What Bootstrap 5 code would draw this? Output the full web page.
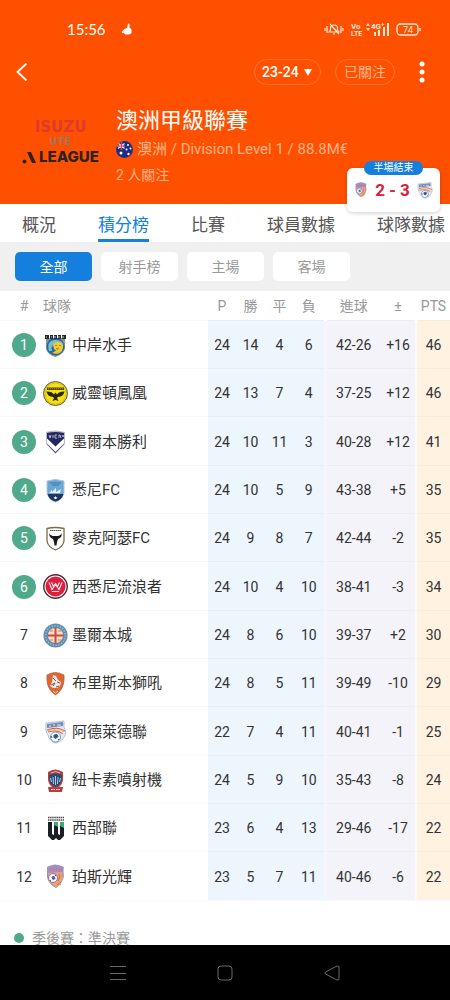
<!DOCTYPE html>
<html lang="zh-Hant">
<head>
<meta charset="utf-8">
<meta name="viewport" content="width=device-width, initial-scale=1">
<title>澳洲甲級聯賽 - 積分榜</title>
<link href="https://cdn.jsdelivr.net/npm/bootstrap@5.3.0/dist/css/bootstrap.min.css" rel="stylesheet">
<style>
  :root { --brand: #ff5000; --accent: #147fdc; --playoff: #4fa98a; --pale: #ffb48c; }
  body { font-family: Roboto, "Noto Sans CJK TC", sans-serif; font-size: 14px; line-height: 20px; color: #333; background: #fff; }
  .app-header { background: var(--brand); color: #fff; height: 204px; }
  .status-bar { height: 58px; padding: 0 28px 0 67px; font-family: Lato, sans-serif; font-size: 15px; }
  .top-nav { height: 28px; padding: 0 25px 0 16px; }
  .pill { height: 26px; border: 1px solid #ff7333; border-radius: 13px; background: transparent; font-size: 14px; line-height: 20px; }
  .season { width: 67px; }
  .season select { appearance: none; border: 0; background: transparent; color: #fff; font-size: 14px; font-weight: 500; padding: 0 0 0 7px; width: 100%; height: 24px; outline-offset: 2px; }
  .season svg { right: 8px; top: 9px; pointer-events: none; }
  .season option { color: #333; }
  .follow { width: 60px; margin: 0 24px 0 14px; color: var(--pale); }
  .dots { padding: 0; border: 0; background: transparent; line-height: 1; }
  .league { padding: 20px 20px 0; gap: 15px; }
  .league-logo { width: 81px; padding-top: 12px; }
  .sponsor { font: bold 15px/18px "DejaVu Sans", sans-serif; color: #e03a2c; }
  .sponsor-sub { font: bold 10px/12px "DejaVu Sans", sans-serif; color: #a5745c; }
  .league-word { font: 800 15px/18px Inter, sans-serif; color: #2a2320; gap: 3px; }
  h1 { font-size: 22px; line-height: 30px; font-weight: 400; }
  .sub { color: var(--pale); line-height: 26px; font-size: 14px; }
  .sub-wide { font-size: 15px; }
  .live-card { right: 10px; bottom: -8px; width: 93px; height: 44px; background: #fff; border-radius: 6px; box-shadow: 0 1px 4px #0003; padding: 0 6px; z-index: 2; }
  .live-card strong { color: #d5203f; font-size: 17px; font-weight: 700; }
  .live-tag { top: -7px; left: 17px; right: 17px; height: 14px; border-radius: 7px; background: var(--accent); color: #fff; font-size: 10px; line-height: 14px; }
  .tabs-bar { height: 38px; padding-left: 22px; gap: 42px; overflow: hidden; font-size: 17px; }
  .tabs-bar a { color: #555; line-height: 42px; height: 38px; text-decoration: none; white-space: nowrap; }
  .tabs-bar a.active { color: var(--accent); box-shadow: inset 0 -3px var(--accent); }
  .filters { background: #f0f0f0; padding: 10px 15px; gap: 9px; }
  .filters .btn { width: 77px; height: 29px; padding: 1px 0 0; border: 0; border-radius: 5px; background: #fff; color: #999; font-size: 14px; }
  .filters .btn.active { background: var(--accent); color: #fff; }
  .standings { table-layout: fixed; width: 100%; text-align: center; }
  .standings th, .standings td { padding: 2px 0 0; font-weight: 400; border-bottom: 1px solid #00000007; }
  .standings thead tr { height: 29px; color: #999; }
  .standings tbody tr { height: 48px; }
  .standings tbody tr:nth-child(3n) { height: 49px; }
  .c-rank { width: 43px; } .c-p { width: 28px; } .c-w { width: 29px; } .c-l { width: 31px; }
  .c-goals { width: 56px; } .c-diff { width: 35px; } .c-pts { width: 34px; }
  .rank { display: block; width: 24px; line-height: 24px; margin-left: 12px; border-radius: 50%; }
  .playoff .rank { background: var(--playoff); color: #fff; }
  .standings .team { text-align: left; white-space: nowrap; }
  .club { font-size: 15px; gap: 4px; }
  .standings td:nth-child(n+3) { background: #edf5fd; }
  .standings td:nth-child(n+7) { background: #f4f3f9; }
  .standings td:nth-child(9) { background: #fff2e0; }
  .standings tr > :nth-child(6) { border-right: 3px solid #f3f7fc; }
  .standings tr > :nth-child(8) { border-right: 2px solid #fbf9f9; }
  .standings thead th:nth-child(n) { border-right-color: #fff; }
  .legend-row { padding: 27px 14px 0; gap: 8px; color: #999; }
  .legend-dot { width: 10px; height: 10px; border-radius: 50%; background: var(--playoff); }
  .system-nav { height: 55px; background: #000; padding: 0 64px; }
  .system-nav button { padding: 0; border: 0; background: transparent; line-height: 1; }
</style>
</head>
<body>
<svg width="0" height="0" class="position-absolute" aria-hidden="true">
  <defs>
    <symbol id="mariners" viewBox="0 0 25 25"><path d="M3 5h19v11q-3 6-9.500 8Q5 22 3 16Z" fill="#8b958f"/><circle cx="12.500" cy="13.500" r="9" fill="#2469a5"/><path d="M6 18Q3 8 12 7q7-1 9 6-2-4-8-3-6 1-4 8Z" fill="#79bed0"/><path d="M9 20q9 3 11-5 1-6-5-6-5 0-6 5 4-4 6-2 2 4-6 8Z" fill="#efc62f"/><circle cx="14.500" cy="13.500" r="4" fill="#f4cc32"/><path d="m12.500 13 1-1m3 0 1 1m-4 2.500q1 1 2 0" stroke="#45433a" fill="none"/><path d="M2 2h4v4H2zm5 0h3v4H7zm4 0h3v4h-3zm4 0h3v4h-3zm4 0h4v4h-4z" fill="#252a32"/><path d="M3 4h1m4 0h1m3-1v2m4-2v2m4-2v2" stroke="#c5c8c0"/></symbol>
    <symbol id="phoenix" viewBox="0 0 25 25"><circle cx="12.500" cy="12.500" r="12" fill="#e9d12c" stroke="#454019" stroke-width=".8"/><circle cx="12.500" cy="12.500" r="10.500" fill="#f8df13" stroke="#c4ac17" stroke-width=".5"/><path d="M4 6.500h17v2.500H4z" fill="#4b4414"/><path d="M5 7.800h15" stroke="#b9a31a" stroke-dasharray="1 1"/><path d="M3.500 10.500q6 0 7.500 3l1.500-2 1.500 2q1.500-3 7.500-3-1 5-6.500 5.500l-1 1 1.500 3-3-1-3 1 1.500-3-1-1q-5.500-.500-6.500-5.500Z" fill="#29270e"/></symbol>
    <symbol id="victory" viewBox="0 0 25 25"><path d="M3 3q9-3 19 0v12l-9.500 10L3 15Z" fill="#b9bac9"/><path d="M4 4q8-2 17 0v11l-8.500 9L4 15Z" fill="#23295e"/><path d="M4 9.500v5l8.500 8.500L21 14.500v-5l-8.500 8Z" fill="#fff"/><path d="m6 6 1 3 1-3m2 0v3m4-3h-2v3h2m2-3v3m0-3h1l1 3m1-3 1 2 1-2" fill="none" stroke="#d5d6e5" stroke-width=".8"/></symbol>
    <symbol id="sydney" viewBox="0 0 25 25"><path d="M4 3q8-3 17 0v12q-2 7-8.500 9Q6 22 4 15Z" fill="#6ba8d4" stroke="#b8c6d4"/><path d="M4.500 16h16Q19 22 12.500 23.500 6 22 4.500 16Z" fill="#1c3663"/><path d="m6 15 3-3 0 2 4-4v4l5-3-1 4Z" fill="#e3f2fb"/><path d="M7 5h11M9 7h7" stroke="#3879b4"/><path d="m12.500 18 .7 1.200h1.300l-.8 1.200-1.200.8-1.200-.8-.8-1.200h1.300Z" fill="#f1f3f5"/></symbol>
    <symbol id="macarthur" viewBox="0 0 25 25"><path d="M4 2.500q8-2 17 0V15q-1 6-8.500 9Q5 21 4 15Z" fill="#fff" stroke="#77703d" stroke-width="1.300"/><path d="M7 4.500h11" stroke="#555" stroke-dasharray="1.500 .5"/><path d="M6.500 7q-1 4.500 3.500 6l1 3 .500 3.500h2l.500-3.500 1-3q4.500-1.500 3.500-6-.500 2.500-4 3h-4q-3.500-.500-4-3Z" fill="#181818"/></symbol>
    <symbol id="wanderers" viewBox="0 0 25 25"><circle cx="12.500" cy="12.500" r="11.700" fill="#fff" stroke="#51252b" stroke-width="1.400"/><circle cx="12.500" cy="12.500" r="10" fill="#dc2040"/><path d="m6 8.500 3 7 3.500-5 3.500 5 3-7M8.500 8.500l2 4 2-3 2 3 2-4M9 17.500h7" fill="none" stroke="#ffdfe4" stroke-width="1.200"/></symbol>
    <symbol id="city" viewBox="0 0 25 25"><circle cx="12.500" cy="12.500" r="12" fill="#628db0"/><circle cx="12.500" cy="12.500" r="9.800" fill="none" stroke="#a1bfd2" stroke-dasharray="1.200 1.600" stroke-width="1.600"/><circle cx="12.500" cy="12.500" r="7.600" fill="#f6ddd1"/><path d="M11.500 4.500h2v7h7v2h-7v7h-2v-7h-7v-2h7Z" fill="#d64636"/><path d="M7 8h3m5 0h3M7 17h3m5 0h3" stroke="#e2a84f" stroke-width="1.500"/></symbol>
    <symbol id="roar" viewBox="0 0 25 25"><path d="M4 4q8-5 17 0 1 12-6 18l-2.500 2-2.500-2Q3 16 4 4Z" fill="#df6631" stroke="#a35c42" stroke-width=".7"/><path d="m10 4 3 1 2 4 3 2-1 4-3 2-4 0-3-2 2-4Z" fill="#f3e5dd"/><path d="m10 7 3 3m-5 4 4-2m2-1 3 1m-5 0-2 3m3 1 3-1" stroke="#6b5968"/><path d="m10 20 2.500 2 2.500-2" fill="none" stroke="#ffc9a9"/></symbol>
    <symbol id="adelaide" viewBox="0 0 25 25"><path d="M3 4 21 2v7q3 2 1 7-2 6-9 8-7-2-8-8Q2 13 3 4Z" fill="#e8edf5" stroke="#b4bed1"/><path d="M4 5 20 3v4L4 9Z" fill="#6f88b8"/><path d="M6 7h2m2-1h2m2 0h4" stroke="#e9eef7"/><path d="M4 11q10-4 18 1M5 13q9-3 15 2" fill="none" stroke="#d85243"/><path d="M4 12q9-3 17 1" fill="none" stroke="#e9bc49" stroke-width=".8"/><circle cx="12.500" cy="18" r="5" fill="#fff" stroke="#7290b9"/><path d="m11 16 3-.500 1 2-2 2-2-1Zm-3 1 1 2m6 2 1-1" stroke="#28578e" fill="#28578e"/></symbol>
    <symbol id="jets" viewBox="0 0 25 25"><path d="M5 4q7-5 15 0v8q-1 5-4 7h4l-1 5H6l-1-5h4q-3-2-4-7Z" fill="#b73f3d"/><path d="M6 7q7-3 13 0l-1 8-5.500 4L7 15Z" fill="#254b78"/><path d="m7.500 10 1 4m1.500-5 .500 7m2-8v9m2.500-8-.500 7m3-6-1 4" stroke="#acd0e1"/><path d="M8 5q5-3 9 0" fill="none" stroke="#e6b7a2"/><path d="M8 21.500h9" stroke="#fff" stroke-dasharray="1.500 1"/></symbol>
    <symbol id="western" viewBox="0 0 25 25"><path d="M5 1.500h16M5 4h16" stroke="#474747" stroke-width="1.500" stroke-dasharray="1.500 .6"/><path d="M5 6h4v12l2 1V6h4v12l2 1V6h4v14l-4 4h-2l-2-2-2 2H9l-4-4Z" fill="#1b1e22"/><path d="M11 6h4v5l-4-2Zm6 0h4v6l-4-2Z" fill="#37ae7c"/></symbol>
    <symbol id="glory" viewBox="0 0 25 25"><path d="M4 3q8-5 17 0-1 3 0 9-1 7-8 12Q5 20 4 13Z" fill="#a291be"/><path d="m5 9 14-1 1 8-2 1 0 4-3 0-1 3-4-3-4-3Z" fill="#f0a366"/><path d="M6 5.500h13" stroke="#c9709e" stroke-width="2" stroke-dasharray="1.500 .8"/><circle cx="10" cy="14" r="4.500" fill="#f7f3fa" stroke="#8577b1"/><path d="m9 13 2-.500 1 2-2 1Zm-2 4 1-1m4-4 1-1" stroke="#5e5798" fill="#5e5798"/><path d="m16 10 1 3-2 4m3 1-4 3" stroke="#b56b82" fill="none"/></symbol>
  </defs>
</svg>

<div class="d-flex flex-column vh-100">
  <header class="app-header position-relative flex-shrink-0">
    <div class="status-bar d-flex align-items-center">
      <time>15:56</time>
      <svg class="ms-3" width="10" height="12" viewBox="0 0 10 12" fill="#fff" aria-hidden="true"><path d="M6 1q1-1 1.500 0v4Q9 5 9 6q1 1 .500 2Q10 11 7 11.500H3.500Q2.500 11 2 10H0V8.500L2.500 6 5 5Z"/></svg>
      <svg class="ms-auto" width="98" height="16" viewBox="0 0 98 16" fill="none" stroke="#ffe9d8" aria-label="靜音 VoLTE 4G 電量 74" role="img">
        <path d="M1 7v3m2-5v7m14-7v7m2-5v3M5 11h10l-1.500-2V7q0-3-3.500-3-3.500 0-3.500 3v2Zm4 2h2M6 3l9 10" stroke-width="1.200"/>
        <g fill="#ffe9d8" stroke="none" font-family="Roboto, sans-serif" font-weight="700"><text x="27" y="8" font-size="8">Vo</text><text x="27" y="15" font-size="7">LTE</text><text x="47" y="8" font-size="8">4G⁺</text><path d="m42 5 2-3 2 3Zm0 2 2 3 2-3ZM50 11h2v4h-2Zm4-2h2v6h-2Zm5-3h2v9h-2Zm4-4h2v13h-2Z"/></g>
        <rect x="73" y="3" width="21" height="11" rx="3.500" stroke-width="1.300"/><path d="M96 7v3" stroke-width="1.500"/><text x="79" y="12" font-family="Roboto, sans-serif" font-size="9" fill="#ffe9d8" stroke="none">74</text>
      </svg>
    </div>
    <div class="top-nav d-flex align-items-center">
      <button class="dots" type="button" aria-label="返回"><svg width="12" height="20" viewBox="0 0 12 20" fill="none" stroke="#fff" stroke-width="1.800"><path d="m10.500 1.500-9 8.500 9 8.500"/></svg></button>
      <div class="season pill position-relative ms-auto">
        <select aria-label="賽季"><option>23-24</option><option>22-23</option></select>
        <svg class="position-absolute" width="8" height="7" viewBox="0 0 8 7" fill="#fff" aria-hidden="true"><path d="M0 0h8L4 7Z"/></svg>
      </div>
      <button class="pill follow p-0" type="button">已關注</button>
      <button class="dots" type="button" aria-label="更多"><svg width="6" height="22" viewBox="0 0 6 22" fill="#fff"><circle cx="3" cy="3" r="2.500"/><circle cx="3" cy="11" r="2.500"/><circle cx="3" cy="19" r="2.500"/></svg></button>
    </div>
    <div class="league d-flex">
      <div class="league-logo text-center">
        <div class="sponsor">ISUZU</div>
        <div class="sponsor-sub">UTE</div>
        <div class="league-word d-flex align-items-center justify-content-center">
          <svg class="flex-shrink-0" width="14" height="13" viewBox="0 0 14 13" fill="#2a2320" role="img" aria-label="A"><path d="M5 1h4l5 11h-4Z"/><circle cx="2.500" cy="10.500" r="2"/></svg>
          <span>LEAGUE</span>
        </div>
      </div>
      <div>
        <h1 class="mb-0">澳洲甲級聯賽</h1>
        <div class="sub sub-wide d-flex align-items-center gap-1">
          <svg width="17" height="17" viewBox="0 0 17 17" role="img" aria-label="澳洲國旗"><circle cx="8.500" cy="8.500" r="8.500" fill="#1c2c84"/><path d="M2.500 2.500 8.500 7.500M2 7.500 8.500 2.500M.8 5h7.700M5.500.8v7.700" stroke="#f3dfe8" stroke-width="1.200"/><path d="M.8 5h7.700M5.500.8v7.700" stroke="#e63b3b"/><g fill="#fff"><circle cx="5" cy="12" r="1.500"/><circle cx="12" cy="4" r="1"/><circle cx="14.500" cy="7.500" r="1"/><circle cx="10.500" cy="8.500" r="1"/><circle cx="12.500" cy="13" r="1.200"/></g></svg>
          <span>澳洲 / Division Level 1 / 88.8M€</span>
        </div>
        <div class="sub">2 人關注</div>
      </div>
    </div>
    <a class="live-card position-absolute d-flex align-items-center justify-content-between text-decoration-none" href="#match">
      <span class="live-tag position-absolute text-center">半場結束</span>
      <svg width="16" height="18"><use href="#glory"/></svg>
      <strong>2 - 3</strong>
      <svg width="18" height="18"><use href="#adelaide"/></svg>
    </a>
  </header>

  <nav class="tabs-bar d-flex flex-shrink-0" aria-label="聯賽">
    <a href="#overview">概況</a><a class="active" href="#standings" aria-current="page">積分榜</a><a href="#matches">比賽</a><a href="#players">球員數據</a><a href="#teams">球隊數據</a>
  </nav>

  <main class="flex-grow-1 overflow-hidden" id="standings">
    <div class="filters d-flex">
      <button class="btn active" type="button">全部</button><button class="btn" type="button">射手榜</button><button class="btn" type="button">主場</button><button class="btn" type="button">客場</button>
    </div>
    <table class="standings">
      <thead><tr><th class="c-rank"><span class="rank">#</span></th><th class="team">球隊</th><th class="c-p">P</th><th class="c-w">勝</th><th class="c-w">平</th><th class="c-l">負</th><th class="c-goals">進球</th><th class="c-diff">±</th><th class="c-pts">PTS</th></tr></thead>
      <tbody>
        <tr class="playoff"><td><span class="rank">1</span></td><td class="team"><div class="club d-flex align-items-center"><svg width="25" height="25"><use href="#mariners"/></svg>中岸水手</div></td><td>24</td><td>14</td><td>4</td><td>6</td><td>42-26</td><td>+16</td><td>46</td></tr>
        <tr class="playoff"><td><span class="rank">2</span></td><td class="team"><div class="club d-flex align-items-center"><svg width="25" height="25"><use href="#phoenix"/></svg>威靈頓鳳凰</div></td><td>24</td><td>13</td><td>7</td><td>4</td><td>37-25</td><td>+12</td><td>46</td></tr>
        <tr class="playoff"><td><span class="rank">3</span></td><td class="team"><div class="club d-flex align-items-center"><svg width="25" height="25"><use href="#victory"/></svg>墨爾本勝利</div></td><td>24</td><td>10</td><td>11</td><td>3</td><td>40-28</td><td>+12</td><td>41</td></tr>
        <tr class="playoff"><td><span class="rank">4</span></td><td class="team"><div class="club d-flex align-items-center"><svg width="25" height="25"><use href="#sydney"/></svg>悉尼FC</div></td><td>24</td><td>10</td><td>5</td><td>9</td><td>43-38</td><td>+5</td><td>35</td></tr>
        <tr class="playoff"><td><span class="rank">5</span></td><td class="team"><div class="club d-flex align-items-center"><svg width="25" height="25"><use href="#macarthur"/></svg>麥克阿瑟FC</div></td><td>24</td><td>9</td><td>8</td><td>7</td><td>42-44</td><td>-2</td><td>35</td></tr>
        <tr class="playoff"><td><span class="rank">6</span></td><td class="team"><div class="club d-flex align-items-center"><svg width="25" height="25"><use href="#wanderers"/></svg>西悉尼流浪者</div></td><td>24</td><td>10</td><td>4</td><td>10</td><td>38-41</td><td>-3</td><td>34</td></tr>
        <tr><td><span class="rank">7</span></td><td class="team"><div class="club d-flex align-items-center"><svg width="25" height="25"><use href="#city"/></svg>墨爾本城</div></td><td>24</td><td>8</td><td>6</td><td>10</td><td>39-37</td><td>+2</td><td>30</td></tr>
        <tr><td><span class="rank">8</span></td><td class="team"><div class="club d-flex align-items-center"><svg width="25" height="25"><use href="#roar"/></svg>布里斯本獅吼</div></td><td>24</td><td>8</td><td>5</td><td>11</td><td>39-49</td><td>-10</td><td>29</td></tr>
        <tr><td><span class="rank">9</span></td><td class="team"><div class="club d-flex align-items-center"><svg width="25" height="25"><use href="#adelaide"/></svg>阿德萊德聯</div></td><td>22</td><td>7</td><td>4</td><td>11</td><td>40-41</td><td>-1</td><td>25</td></tr>
        <tr><td><span class="rank">10</span></td><td class="team"><div class="club d-flex align-items-center"><svg width="25" height="25"><use href="#jets"/></svg>紐卡素噴射機</div></td><td>24</td><td>5</td><td>9</td><td>10</td><td>35-43</td><td>-8</td><td>24</td></tr>
        <tr><td><span class="rank">11</span></td><td class="team"><div class="club d-flex align-items-center"><svg width="25" height="25"><use href="#western"/></svg>西部聯</div></td><td>23</td><td>6</td><td>4</td><td>13</td><td>29-46</td><td>-17</td><td>22</td></tr>
        <tr><td><span class="rank">12</span></td><td class="team"><div class="club d-flex align-items-center"><svg width="25" height="25"><use href="#glory"/></svg>珀斯光輝</div></td><td>23</td><td>5</td><td>7</td><td>11</td><td>40-46</td><td>-6</td><td>22</td></tr>
      </tbody>
    </table>
    <div class="legend-row d-flex align-items-center"><span class="legend-dot"></span><span>季後賽：準決賽</span></div>
  </main>

  <div class="system-nav d-flex align-items-center flex-shrink-0" role="toolbar" aria-label="系統導覽">
    <button class="flex-fill w-100" type="button" aria-label="選單"><svg width="16" height="16" viewBox="0 0 16 16" stroke="#686868"><path d="M0 1.500h16M0 8.500h16M0 14.500h16"/></svg></button>
    <button class="flex-fill w-100" type="button" aria-label="主畫面"><svg width="16" height="16" viewBox="0 0 16 16" fill="none" stroke="#686868"><rect x="1" y="1" width="14" height="14" rx="3"/></svg></button>
    <button class="flex-fill w-100" type="button" aria-label="返回上頁"><svg width="16" height="16" viewBox="0 0 16 16" fill="none" stroke="#686868"><path d="M1.500 7 13 1q2-.500 2 1v12q0 1.500-2 1L1.500 9q-1-1 0-2Z"/></svg></button>
  </div>
</div>
<script src="https://cdn.jsdelivr.net/npm/bootstrap@5.3.0/dist/js/bootstrap.bundle.min.js"></script>
</body>
</html>
